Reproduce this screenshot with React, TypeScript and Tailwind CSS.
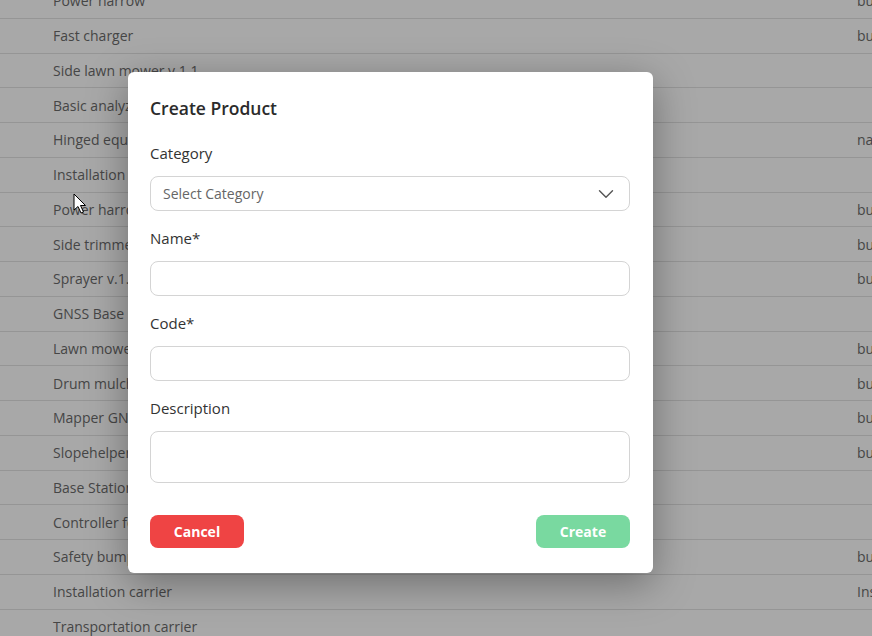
import { ChevronDown } from "lucide-react"

const rows: [string, string][] = [
  ["Power harrow", "bundle"],
  ["Fast charger", "bundle"],
  ["Side lawn mower v.1.1", ""],
  ["Basic analyzer", ""],
  ["Hinged equipment", "name"],
  ["Installation carrier v.1.1", ""],
  ["Power harrow v.1.1", "bundle"],
  ["Side trimmer", "bundle"],
  ["Sprayer v.1.1", "bundle"],
  ["GNSS Base station", ""],
  ["Lawn mower", "bundle"],
  ["Drum mulcher", "bundle"],
  ["Mapper GNSS", "bundle"],
  ["Slopehelper", "bundle"],
  ["Base Station", ""],
  ["Controller for mower", ""],
  ["Safety bumper", "bundle"],
  ["Installation carrier", "Installation"],
  ["Transportation carrier", ""],
]

function Field({ label, tall }: { label: string; tall?: boolean }) {
  return (
    <div className="mt-4">
      <label className="mb-3 block text-[15px] leading-[22px] text-[#333]">{label}</label>
      {tall ? (
        <textarea className="block h-[52px] w-full resize-none rounded-lg border border-[#d4d4d4] px-3 py-2 text-sm outline-none" />
      ) : (
        <input className="block h-[35px] w-full rounded-lg border border-[#d4d4d4] px-3 text-sm outline-none" />
      )}
    </div>
  )
}

export default function App() {
  return (
    <div className="relative h-[636px] w-[872px] overflow-hidden bg-white font-['Open_Sans',sans-serif]">
      <div className="-mt-[16px]">
        {rows.map(([name, kind], i) => (
          <div
            key={i}
            className="flex h-[34.76px] items-center border-b border-[#e2e2e2] pl-[53px] text-[14px] text-[#6b6b6b]"
          >
            <span className="flex-1">{name}</span>
            <span className="w-[15px] overflow-hidden whitespace-nowrap">{kind}</span>
          </div>
        ))}
      </div>

      <div className="absolute inset-0 bg-black/[0.34]" />

      <svg className="absolute left-[73px] top-[193px]" width="14" height="22" viewBox="0 0 14 22">
        <path d="M1 1 L1 17 L5 13.5 L8 20 L10.5 19 L7.5 12.5 L12.5 12.5 Z" fill="#fff" stroke="#000" strokeWidth="1" strokeLinejoin="round" />
      </svg>

      <div className="absolute left-[128px] top-[72px] w-[525px] rounded-md bg-white pb-[25px] pl-[22px] pr-[23px] pt-6 shadow-[0_10px_40px_rgba(0,0,0,0.35)]">
        <h2 className="text-[17.5px] font-semibold leading-6 text-[#2b2b2b]">Create Product</h2>

        <div className="mt-[22px]">
          <label className="mb-3 block text-[15px] leading-[22px] text-[#333]">Category</label>
          <div className="flex h-[35px] items-center justify-between rounded-lg border border-[#d4d4d4] pl-3 pr-[10px] text-[14px] text-[#666]">
            <span>Select Category</span>
            <ChevronDown className="h-[26px] w-[26px] text-[#555]" strokeWidth={1.3} />
          </div>
        </div>

        <Field label="Name*" />
        <Field label="Code*" />
        <Field label="Description" tall />

        <div className="mt-8 flex justify-between">
          <button className="h-[33px] w-[94px] rounded-lg bg-[#ef4444] text-[14px] font-bold text-white">
            Cancel
          </button>
          <button className="h-[33px] w-[94px] rounded-lg bg-[#79d9a0] text-[14px] font-bold text-white">
            Create
          </button>
        </div>
      </div>
    </div>
  )
}
